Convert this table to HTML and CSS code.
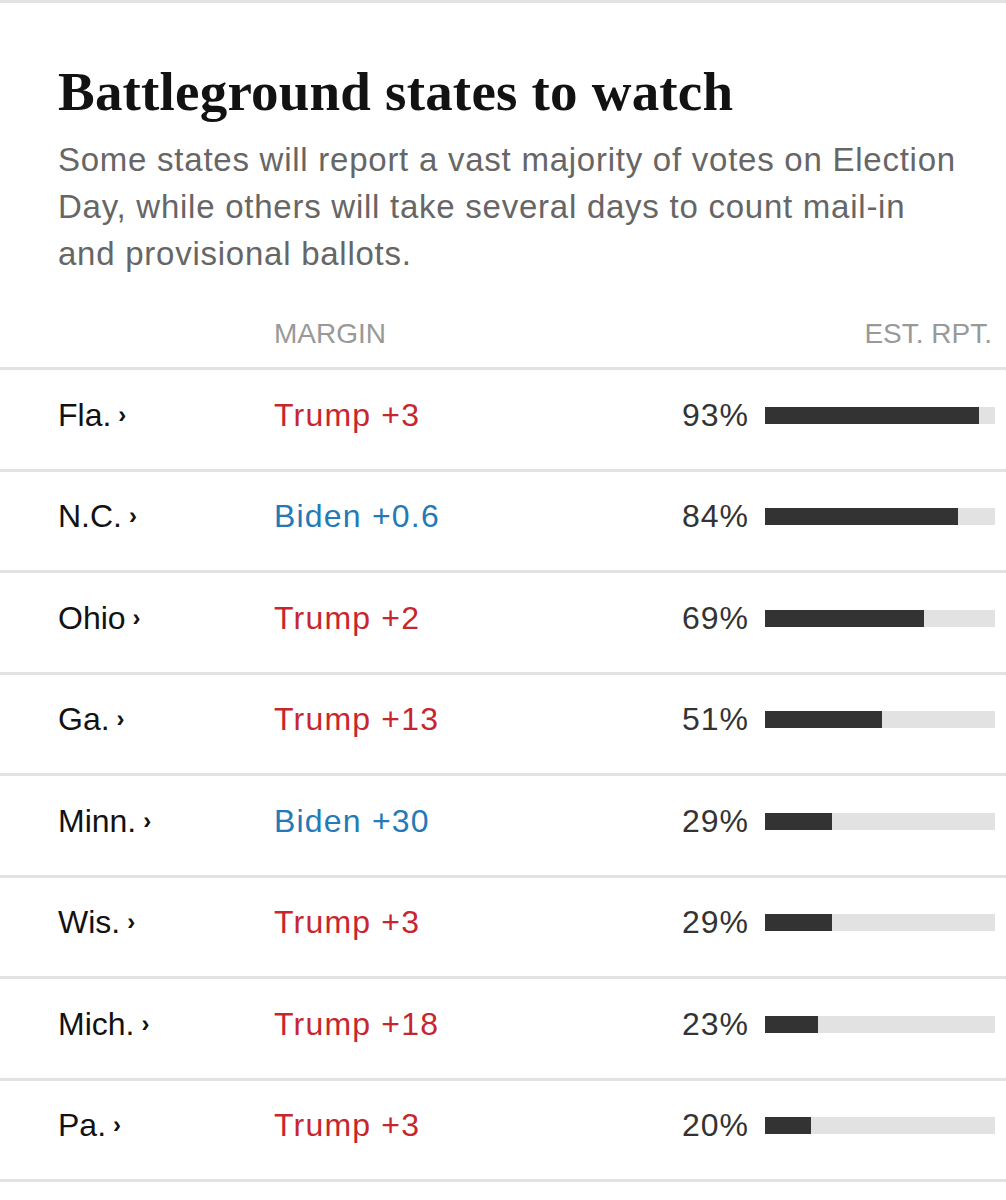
FILE: index.html
```html
<!DOCTYPE html>
<html>
<head>
<meta charset="utf-8">
<link rel="stylesheet" href="styles.css">
</head>
<body>
<div class="card">
  <h1 class="title">Battleground states to watch</h1>
  <p class="dek">Some states will report a vast majority of votes on Election Day, while others will take several days to count mail-in and provisional ballots.</p>
  <div class="table">
    <div class="head">
      <span></span>
      <span class="h-margin">MARGIN</span>
      <span class="h-rpt">EST. RPT.</span>
    </div>
    <div class="row"><span class="state">Fla.<span class="chev">›</span></span><span class="margin rep">Trump +3</span><span class="pct">93%</span><span class="bar"><span class="fill" style="width:93%"></span></span></div>
    <div class="row"><span class="state">N.C.<span class="chev">›</span></span><span class="margin dem">Biden +0.6</span><span class="pct">84%</span><span class="bar"><span class="fill" style="width:84%"></span></span></div>
    <div class="row"><span class="state">Ohio<span class="chev">›</span></span><span class="margin rep">Trump +2</span><span class="pct">69%</span><span class="bar"><span class="fill" style="width:69%"></span></span></div>
    <div class="row"><span class="state">Ga.<span class="chev">›</span></span><span class="margin rep">Trump +13</span><span class="pct">51%</span><span class="bar"><span class="fill" style="width:51%"></span></span></div>
    <div class="row"><span class="state">Minn.<span class="chev">›</span></span><span class="margin dem">Biden +30</span><span class="pct">29%</span><span class="bar"><span class="fill" style="width:29%"></span></span></div>
    <div class="row"><span class="state">Wis.<span class="chev">›</span></span><span class="margin rep">Trump +3</span><span class="pct">29%</span><span class="bar"><span class="fill" style="width:29%"></span></span></div>
    <div class="row"><span class="state">Mich.<span class="chev">›</span></span><span class="margin rep">Trump +18</span><span class="pct">23%</span><span class="bar"><span class="fill" style="width:23%"></span></span></div>
    <div class="row"><span class="state">Pa.<span class="chev">›</span></span><span class="margin rep">Trump +3</span><span class="pct">20%</span><span class="bar"><span class="fill" style="width:20%"></span></span></div>
  </div>
</div>
</body>
</html>
```
FILE: styles.css
```css
html, body {
  margin: 0;
  padding: 0;
  background: #fff;
}
.card {
  border-top: 3px solid #e2e2e2;
  font-family: "Liberation Sans", Arial, sans-serif;
}
.title {
  margin: 0;
  padding: 57px 0 0 58px;
  font-family: "Liberation Serif", "Times New Roman", serif;
  font-weight: 700;
  font-size: 55px;
  line-height: 64px;
  color: #121212;
  letter-spacing: 0.2px;
}
.dek {
  margin: 12px 0 0 0;
  padding: 0 40px 0 58px;
  font-size: 33px;
  line-height: 47px;
  letter-spacing: 0.75px;
  color: #666;
}
.table {
  margin-top: 40px;
}
.head, .row {
  display: grid;
  grid-template-columns: 199px 1fr auto 230px;
  column-gap: 17px;
  align-items: center;
  padding: 0 11px 0 58px;
}
.head {
  column-gap: 0;
  grid-template-columns: 216px 1fr auto;
  padding-right: 14px;
  height: 50px;
  border-bottom: 3px solid #e2e2e2;
  align-items: start;
  font-family: "Liberation Sans Narrow", "Liberation Sans", sans-serif;
  font-size: 28px;
  line-height: 34px;
  color: #999;
}
.h-rpt {
  text-align: right;
}
.row {
  height: 90.5px;
  padding-bottom: 8px;
  border-bottom: 3px solid #e2e2e2;
  font-size: 32px;
}
.state {
  color: #121212;
}
.chev {
  font-size: 24px;
  margin-left: 7px;
  font-weight: 700;
  position: relative;
  top: -3px;
}
.margin {
  letter-spacing: 1.2px;
}
.rep { color: #c8262e; }
.dem { color: #2479b6; }
.pct {
  color: #333;
  text-align: right;
  letter-spacing: 1px;
  margin-right: -1px;
}
.bar {
  display: block;
  height: 17px;
  background: #e2e2e2;
}
.fill {
  display: block;
  height: 100%;
  background: #333;
}
```
